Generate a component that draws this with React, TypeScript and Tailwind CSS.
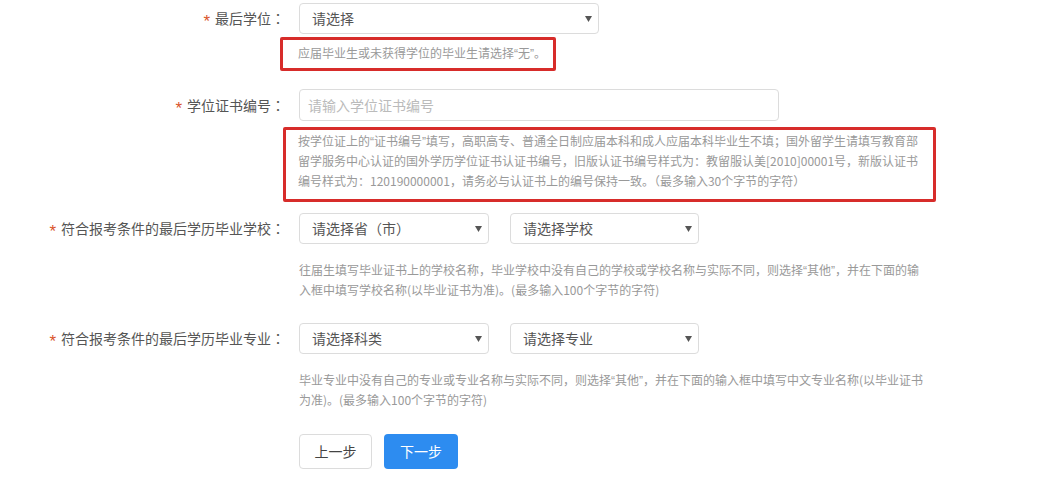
import React from "react";

const Arrow = () => (
  <svg width="7" height="6" viewBox="0 0 7 6" className="shrink-0">
    <path d="M0 0 H7 L3.5 6 Z" fill="#555" />
  </svg>
);

const Q = ({ children }: { children: React.ReactNode }) => (
  <span className="font-['Liberation_Sans'] leading-none">{children}</span>
);

const L = ({ children }: { children: React.ReactNode }) => (
  <div className="h-[20px] leading-[20px] overflow-visible">{children}</div>
);

const Label = ({ text }: { text: string }) => (
  <div className="w-[285px] shrink-0 flex justify-end items-center text-[14px] text-[#555] whitespace-nowrap">
    <span className="font-['Liberation_Sans'] text-[17px] text-[#d9552c] mr-[5px] translate-y-[3px] inline-block leading-none">*</span>
    <span>{text}</span>
    <span className="font-['Noto_Sans_CJK_TC',sans-serif]">：</span>
  </div>
);

const Select = ({ text, w }: { text: string; w: string }) => (
  <div
    className={`${w} h-[31px] border border-[#dcdcdc] rounded-[4px] bg-white flex items-center justify-between pl-[12px] pr-[6px] text-[14px] text-[#555]`}
  >
    <span>{text}</span>
    <Arrow />
  </div>
);

export default function App() {
  return (
    <div className="w-[1039px] h-[489px] bg-white overflow-hidden pt-[3px] font-['Noto_Sans_CJK_SC',sans-serif]">
      {/* Row 1 */}
      <div className="flex items-center h-[31px]">
        <Label text="最后学位" />
        <div className="ml-[14px]">
          <Select text="请选择" w="w-[300px]" />
        </div>
      </div>
      <div className="ml-[298px] mt-[9px] relative text-[12px] text-[#999] whitespace-nowrap">
        <div className="absolute left-[-18px] top-[-6px] w-[276px] h-[34px] border-[3px] border-[#d72c2a] rounded-[2px]" />
        <L>应届毕业生或未获得学位的毕业生请选择<Q>“</Q>无<Q>”</Q>。</L>
      </div>

      {/* Row 2 */}
      <div className="flex items-center h-[32px] mt-[26px]">
        <Label text="学位证书编号" />
        <div className="ml-[14px] w-[480px] h-[32px] border border-[#dcdcdc] rounded-[4px] flex items-center pl-[8px] text-[14px] text-[#bbb]">
          请输入学位证书编号
        </div>
      </div>
      <div className="ml-[298px] mt-[10px] relative text-[12px] text-[#999] whitespace-nowrap">
        <div className="absolute left-[-15px] top-[-4px] w-[653px] h-[75px] border-[3px] border-[#d72c2a] rounded-[2px]" />
        <L>按学位证上的<Q>“</Q>证书编号<Q>”</Q>填写，高职高专、普通全日制应届本科和成人应届本科毕业生不填；国外留学生请填写教育部</L>
        <L>留学服务中心认证的国外学历学位证书认证书编号，旧版认证书编号样式为：教留服认美[2010]00001号，新版认证书</L>
        <L>编号样式为：120190000001，请务必与认证书上的编号保持一致。（最多输入30个字节的字符）</L>
      </div>

      {/* Row 3 */}
      <div className="flex items-center h-[31px] mt-[22px]">
        <Label text="符合报考条件的最后学历毕业学校" />
        <div className="ml-[14px] flex gap-[21px]">
          <Select text="请选择省（市）" w="w-[190px]" />
          <Select text="请选择学校" w="w-[189px]" />
        </div>
      </div>
      <div className="ml-[299px] mt-[16px] text-[12px] text-[#999] whitespace-nowrap">
        <L>往届生填写毕业证书上的学校名称，毕业学校中没有自己的学校或学校名称与实际不同，则选择<Q>“</Q>其他<Q>”</Q>，并在下面的输</L>
        <L>入框中填写学校名称(以毕业证书为准)。(最多输入100个字节的字符)</L>
      </div>

      {/* Row 4 */}
      <div className="flex items-center h-[31px] mt-[23px]">
        <Label text="符合报考条件的最后学历毕业专业" />
        <div className="ml-[14px] flex gap-[21px]">
          <Select text="请选择科类" w="w-[190px]" />
          <Select text="请选择专业" w="w-[189px]" />
        </div>
      </div>
      <div className="ml-[299px] mt-[16px] text-[12px] text-[#999] whitespace-nowrap">
        <L>毕业专业中没有自己的专业或专业名称与实际不同，则选择<Q>“</Q>其他<Q>”</Q>，并在下面的输入框中填写中文专业名称(以毕业证书</L>
        <L>为准)。(最多输入100个字节的字符)</L>
      </div>

      {/* Buttons */}
      <div className="ml-[299px] mt-[24px] flex gap-[12px]">
        <button className="w-[73px] h-[35px] border border-[#dcdcdc] rounded-[4px] bg-white text-[14px] text-[#444]">
          上一步
        </button>
        <button className="w-[74px] h-[35px] rounded-[4px] bg-[#2d8cf0] text-[14px] text-white">
          下一步
        </button>
      </div>
    </div>
  );
}
